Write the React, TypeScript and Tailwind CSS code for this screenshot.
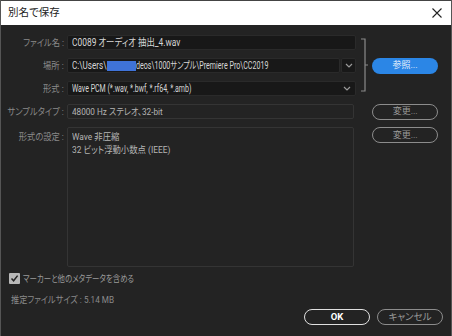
import React from "react";

const font = {
  fontFamily: 'Roboto, "Noto Sans CJK JP", sans-serif',
};

function Chevron() {
  return (
    <svg width="8" height="5" viewBox="0 0 8 5" className="block">
      <path d="M1 1 L4 4 L7 1" fill="none" stroke="#9a9a9a" strokeWidth="1.2" />
    </svg>
  );
}

function Label({ children }: { children: React.ReactNode }) {
  return (
    <span className="w-[57px] shrink-0 flex justify-end whitespace-nowrap text-[9.5px] text-[#8a8a8a] leading-none">
      <span className="inline-block scale-x-[0.87] origin-right">{children}</span>
    </span>
  );
}

export default function App() {
  return (
    <div
      className="w-[452px] h-[336px] bg-[#232323] overflow-hidden flex flex-col border-x border-[#555] [font-feature-settings:'palt']"
      style={font}
    >
      {/* title bar */}
      <div className="h-[25px] shrink-0 bg-white flex items-center justify-between pl-[7px] pr-[9px] border-t border-[#444]">
        <span className="text-[10.5px] text-[#222] leading-none">別名で保存</span>
        <svg width="10" height="10" viewBox="0 0 10 10">
          <path d="M0.5 0.5 L9.5 9.5 M9.5 0.5 L0.5 9.5" stroke="#222" strokeWidth="1.1" />
        </svg>
      </div>

      <div className="flex-1 flex flex-col pt-[10px] pl-[6px] pr-[13px]">
        {/* top group */}
        <div className="flex">
          <div className="flex flex-col gap-[8px] w-[349px]">
            <div className="flex items-center h-[15px]">
              <Label>ファイル名 :</Label>
              <div className="ml-[3px] w-[289px] h-[15px] bg-[#181818] border border-[#2a2a2a] rounded-[2px] flex items-center pl-[4px] text-[10px] text-[#d6d6d6] leading-none whitespace-nowrap">
                <span className="inline-block scale-x-[0.84] origin-left">C0089 オーディオ 抽出_4.wav</span>
              </div>
            </div>
            <div className="flex items-center h-[15px]">
              <Label>場所 :</Label>
              <div className="ml-[3px] w-[289px] h-[15px] flex gap-[1px]">
                <div className="flex-1 bg-[#181818] border border-[#2a2a2a] rounded-[2px] flex items-center pl-[4px] text-[10px] text-[#d6d6d6] leading-none whitespace-nowrap overflow-hidden">
                  <span className="inline-block scale-x-[0.81] origin-left">C:\Users\</span>
                  <span className="ml-[-8px] inline-block w-[29px] h-[10px] bg-[#3f73d8]"></span>
                  <span className="inline-block scale-x-[0.71] origin-left">deos\1000サンプル\Premiere Pro\CC2019</span>
                </div>
                <div className="w-[15px] bg-[#181818] border border-[#2a2a2a] rounded-[2px] flex items-center justify-center">
                  <Chevron />
                </div>
              </div>
            </div>
            <div className="flex items-center h-[15px]">
              <Label>形式 :</Label>
              <div className="ml-[3px] w-[289px] h-[15px] bg-[#181818] border border-[#2a2a2a] rounded-[2px] flex items-center justify-between pl-[4px] pr-[4px] text-[10px] text-[#d6d6d6] leading-none whitespace-nowrap">
                <span className="inline-block scale-x-[0.7] origin-left">Wave PCM (*.wav, *.bwf, *.rf64, *.amb)</span>
                <Chevron />
              </div>
            </div>
          </div>
          <div className="flex items-center">
            <svg width="8" height="54" viewBox="0 0 8 54" className="ml-[5px] -mt-[1px]">
              <path d="M0 1 H4 V53 H0 M4 27 H7" fill="none" stroke="#8a8a8a" strokeWidth="1.2" />
            </svg>
            <button className="ml-[3px] w-[66px] h-[16px] rounded-full bg-[#2b86e6] text-[9px] text-[#e8f1fc] leading-none flex items-center justify-center">
              参照...
            </button>
          </div>
        </div>

        {/* sample type */}
        <div className="flex items-center mt-[8px] h-[15px]">
          <Label>サンプルタイプ :</Label>
          <div className="ml-[3px] w-[289px] h-[15px] border border-[#343434] rounded-[2px] flex items-center pl-[4px] text-[9.5px] text-[#b5b5b5] leading-none whitespace-nowrap">
            <span className="inline-block scale-x-[0.86] origin-left">48000 Hz ステレオ、32-bit</span>
          </div>
          <button className="ml-[18px] w-[66px] h-[16px] rounded-full border-[1.5px] border-[#8c8c8c] text-[9px] text-[#9a9a9a] leading-none flex items-center justify-center">
            変更...
          </button>
        </div>

        {/* format settings */}
        <div className="flex items-start mt-[8px]">
          <span className="mt-[5px] flex">
            <Label>形式の設定 :</Label>
          </span>
          <div className="ml-[3px] w-[289px] h-[140px] border border-[#343434] rounded-[2px] pl-[4px] pt-[2px] text-[9.5px] text-[#b5b5b5] leading-[13px] whitespace-nowrap">
            <div className="scale-x-[0.88] origin-left">Wave 非圧縮</div>
            <div className="scale-x-[0.88] origin-left">32 ビット浮動小数点 (IEEE)</div>
          </div>
          <button className="ml-[18px] w-[66px] h-[16px] rounded-full border-[1.5px] border-[#8c8c8c] text-[9px] text-[#9a9a9a] leading-none flex items-center justify-center">
            変更...
          </button>
        </div>

        {/* checkbox */}
        <div className="flex items-center mt-[6px] ml-[2px] h-[11px]">
          <div className="w-[11px] h-[11px] bg-[#b8b8b8] rounded-[1px] flex items-center justify-center">
            <svg width="9" height="9" viewBox="0 0 9 9">
              <path d="M1.5 4.5 L3.6 6.8 L7.6 1.6" fill="none" stroke="#232323" strokeWidth="1.5" />
            </svg>
          </div>
          <span className="ml-[3px] inline-block scale-x-[0.78] origin-left text-[9.5px] text-[#9a9a9a] leading-none whitespace-nowrap">マーカーと他のメタデータを含める</span>
        </div>

        <div className="mt-[11px] ml-[4px] text-[9.5px] text-[#8a8a8a] leading-none whitespace-nowrap">
          <span className="inline-block scale-x-[0.86] origin-left">推定ファイルサイズ : 5.14 MB</span>
        </div>

        <div className="flex justify-end gap-[7px] mt-[4px] mr-[-5px]">
          <button className="w-[66px] h-[16px] rounded-full border-[1.5px] border-[#e0e0e0] text-[9.5px] font-bold text-white leading-none flex items-center justify-center">
            OK
          </button>
          <button className="w-[66px] h-[16px] rounded-full border-[1.5px] border-[#8c8c8c] text-[9.5px] text-[#9a9a9a] leading-none flex items-center justify-center">
            キャンセル
          </button>
        </div>
      </div>
    </div>
  );
}
